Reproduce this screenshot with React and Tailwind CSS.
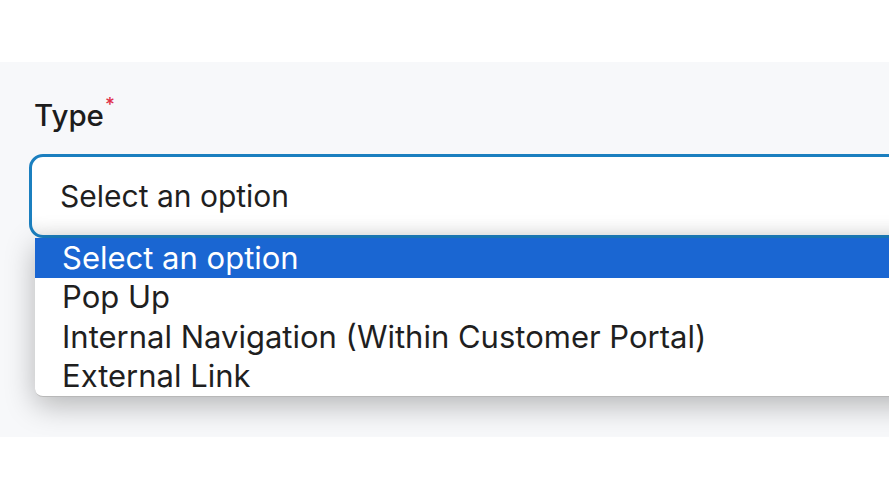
import React from 'react';

const options = [
  'Select an option',
  'Pop Up',
  'Internal Navigation (Within Customer Portal)',
  'External Link',
];

export default function App() {
  return (
    <div className="w-[889px] h-[500px] bg-white overflow-hidden flex flex-col font-['Inter',sans-serif] text-[#1f1f1f]">
      <div className="h-[62px] shrink-0" />
      <div className="relative h-[375px] shrink-0 bg-[#f7f8fa] pl-[29px] pt-[36px]">
        <label className="flex items-start pl-[5px] text-[29.5px] leading-[34px] font-medium text-[#1c1c1c]">
          Type
          <span className="text-[#e0314b] text-[19px] leading-[19px] ml-[1px] -mt-[3px]">*</span>
        </label>
        <div className="mt-[22px] w-[900px] h-[84px] bg-white border-[3px] border-[#1b7fbf] rounded-[14px] flex items-center pl-[28px] text-[30px] shadow-[inset_0_-16px_16px_-12px_rgba(0,0,0,0.07)]">
          Select an option
        </div>
        <ul className="absolute left-[35px] top-[176px] w-[900px] bg-white rounded-bl-[8px] border-b border-[#b8b8b8] shadow-[0_8px_30px_rgba(0,0,0,0.28)]">
          {options.map((o, i) => (
            <li
              key={o}
              className={`h-[39.5px] flex items-center pl-[27px] text-[31px] ${i === 0 ? 'bg-[#1a66d2] text-white' : ''}`}
            >
              {o}
            </li>
          ))}
        </ul>
      </div>
    </div>
  );
}
